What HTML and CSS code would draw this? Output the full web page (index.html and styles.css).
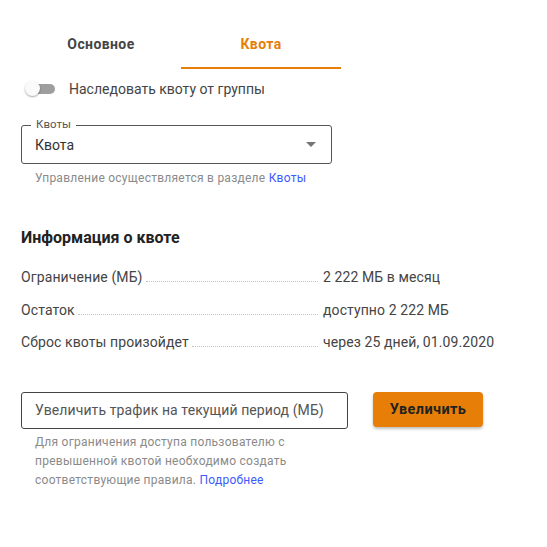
FILE: index.html
```html
<!DOCTYPE html>
<html lang="ru">
<head>
<meta charset="utf-8">
<link rel="stylesheet" href="styles.css">
</head>
<body>
<div class="page">
  <div class="tabs">
    <div class="tab">Основное</div>
    <div class="tab active">Квота</div>
  </div>

  <div class="switch-row">
    <span class="switch"><span class="track"></span><span class="thumb"></span></span>
    <span class="switch-label">Наследовать квоту от группы</span>
  </div>

  <div class="select">
    <span class="legend">Квоты</span>
    <span class="select-value">Квота</span>
    <svg class="arrow" width="10" height="5" viewBox="0 0 10 5"><path d="M0 0h10L5 5z" fill="#757575"/></svg>
  </div>
  <div class="helper">Управление осуществляется в разделе <a class="link">Квоты</a></div>

  <h2 class="heading">Информация о квоте</h2>

  <div class="info">
    <div class="row"><span class="label">Ограничение (МБ)</span><span class="dots"></span><span class="value">2 222 МБ в месяц</span></div>
    <div class="row"><span class="label">Остаток</span><span class="dots"></span><span class="value">доступно 2 222 МБ</span></div>
    <div class="row"><span class="label">Сброс квоты произойдет</span><span class="dots"></span><span class="value">через 25 дней, 01.09.2020</span></div>
  </div>

  <div class="increase">
    <div class="field">
      <div class="input">Увеличить трафик на текущий период (МБ)</div>
      <div class="helper multi">Для ограничения доступа пользователю с превышенной квотой необходимо создать соответствующие правила. <a class="link">Подробнее</a></div>
    </div>
    <button class="btn">Увеличить</button>
  </div>
</div>
</body>
</html>
```

FILE: styles.css
```css
* { box-sizing: border-box; }
body {
  margin: 0;
  background: #fff;
  font-family: Roboto, "Liberation Sans", Arial, sans-serif;
  color: #333;
}
.page {
  padding: 21px 21px 0 21px;
}
.tabs {
  display: flex;
  width: 320px;
}
.tab {
  width: 160px;
  height: 48px;
  display: flex;
  align-items: center;
  justify-content: center;
  font-size: 14px;
  font-weight: 700;
  letter-spacing: 0.4px;
  color: #444;
  border-bottom: 2px solid transparent;
}
.tab.active {
  color: #e67e07;
  border-bottom-color: #e67e07;
}
.switch-row {
  display: flex;
  align-items: center;
  height: 40px;
}
.switch {
  position: relative;
  width: 34px;
  height: 20px;
  margin-left: 4px;
  flex: none;
}
.track {
  position: absolute;
  left: 5px;
  top: 5px;
  width: 25px;
  height: 10px;
  border-radius: 5px;
  background: #9e9e9e;
}
.thumb {
  position: absolute;
  left: 0;
  top: 2px;
  width: 15px;
  height: 15px;
  border-radius: 50%;
  background: #fafafa;
  box-shadow: 0 1px 2px rgba(0,0,0,0.35);
}
.switch-label {
  margin-left: 10px;
  font-size: 14px;
  color: #444;
}
.select {
  position: relative;
  margin-top: 16px;
  width: 311px;
  height: 39px;
  border: 1px solid #555;
  border-radius: 3px;
  display: flex;
  align-items: center;
  padding: 0 13px;
}
.legend {
  position: absolute;
  left: 9px;
  top: -10px;
  padding: 0 5px;
  background: #fff;
  font-size: 11.5px;
  color: #555;
  line-height: 16px;
}
.select-value {
  flex: 1;
  font-size: 14px;
  color: #333;
  padding-top: 1px;
}
.arrow {
  margin-right: 2px;
}
.helper {
  margin-top: 6px;
  padding-left: 14px;
  font-size: 12px;
  letter-spacing: 0.25px;
  color: #8a8a8a;
  line-height: 16px;
}
.link {
  color: #3d5afe;
}
.heading {
  margin: 42px 0 0 0;
  font-size: 16px;
  font-weight: 700;
  color: #222;
  line-height: 20px;
}
.info {
  margin-top: 19px;
  width: 477px;
}
.row {
  display: flex;
  align-items: baseline;
  height: 32.5px;
  font-size: 14px;
  letter-spacing: 0.1px;
  color: #444;
  line-height: 20px;
}
.dots {
  flex: 1;
  border-bottom: 1px dotted #c4c4c4;
  margin: 0 5px 0 3px;
  height: 1px;
}
.value {
  width: 175px;
  flex: none;
}
.increase {
  display: flex;
  align-items: flex-start;
  margin-top: 27px;
  gap: 25px;
}
.field {
  width: 327px;
}
.input {
  height: 37px;
  border: 1px solid #444;
  border-radius: 3px;
  display: flex;
  align-items: center;
  padding: 0 13px;
  font-size: 14px;
  letter-spacing: 0.1px;
  color: #555;
}
.helper.multi {
  width: 275px;
  line-height: 19px;
  margin-top: 4px;
}
.btn {
  width: 110px;
  height: 35px;
  border: none;
  border-radius: 4px;
  background: #e67e07;
  color: #222;
  font-family: inherit;
  font-size: 14.5px;
  font-weight: 700;
  letter-spacing: 0.4px;
  box-shadow: 0 2px 3px rgba(0,0,0,0.25);
}
```
